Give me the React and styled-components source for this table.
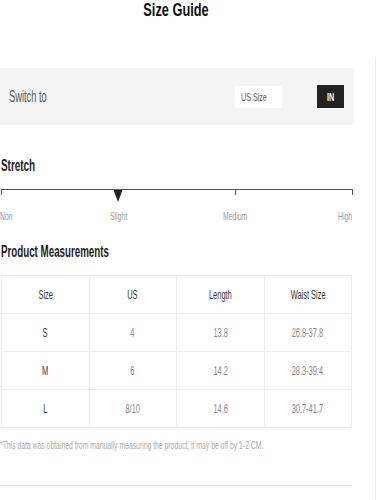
import React from "react";
import styled, { createGlobalStyle } from "styled-components";

const Global = createGlobalStyle`
  html, body { margin: 0; padding: 0; background: #fff; }
  body { font-family: "Liberation Sans", Arial, Helvetica, sans-serif; color: #222; }
`;

/* The reference typography is a horizontally condensed Arial-like face. */
const Squeeze = styled.span`
  display: inline-block;
  white-space: nowrap;
  transform: scaleX(${(p) => p.$scale || 0.62});
  transform-origin: ${(p) => p.$origin || "left"} center;
`;

const Page = styled.div`
  width: 377px;
  min-height: 500px;
  position: relative;
  box-sizing: border-box;
  padding-right: 24px;
  overflow: hidden;
`;

const EdgeLine = styled.div`
  position: absolute;
  right: 1px;
  top: 58px;
  bottom: 0;
  width: 1px;
  background: #ededed;
`;

const Title = styled.h1`
  margin: 0;
  height: 68px;
  text-align: center;
  font-size: 18px;
  font-weight: 700;
  line-height: 20px;
  color: #111;
`;

const SwitchBar = styled.div`
  background: #f4f4f4;
  height: 57px;
  display: flex;
  align-items: center;
  padding: 0 9px;
  box-sizing: border-box;
`;

const SwitchLabel = styled.span`
  font-size: 16px;
  color: #555;
  flex: 1;
`;

const UnitBox = styled.div`
  background: #fff;
  width: 47px;
  height: 22px;
  display: flex;
  align-items: center;
  padding-left: 6px;
  box-sizing: border-box;
  font-size: 11.5px;
  color: #555;
  margin-right: 35px;
`;

const UnitButton = styled.div`
  background: #222;
  color: #fff;
  width: 27px;
  height: 23px;
  display: flex;
  align-items: center;
  justify-content: center;
  font-size: 11px;
  font-weight: 700;
`;

const SectionTitle = styled.h2`
  margin: 0;
  font-size: 16px;
  font-weight: 700;
  color: #222;
  line-height: 18px;
  padding-left: 1px;
`;

const StretchSection = styled.div`
  padding-top: 32px;
`;

const Scale = styled.div`
  position: relative;
  margin-top: 14px;
  margin-left: 1px;
  height: 14px;
  border-top: 1px solid #555;
  display: grid;
  grid-template-columns: 234px 1fr;
  width: 352px;
`;

const Tick = styled.div`
  border-left: 1px solid #555;
  height: 5px;
  ${(p) => p.$right && "border-right: 1px solid #555;"}
`;

const Marker = styled.svg`
  position: absolute;
  left: 112px;
  top: 0px;
`;

const ScaleLabels = styled.div`
  font-size: 11px;
  color: #999;
  margin-top: 6px;
  width: 353px;
  position: relative;
  height: 13px;
`;

const ScaleLabel = styled.span`
  position: absolute;
  left: ${(p) => p.$x}px;
  top: 0;
`;

const MeasureSection = styled.div`
  padding-top: 20px;
`;

const Table = styled.table`
  margin-top: 14px;
  margin-left: 1px;
  width: 351px;
  border-collapse: collapse;
  table-layout: fixed;
`;

const Cell = styled.td`
  border: 1px solid #ececec;
  height: 37px;
  padding: 0;
  text-align: center;
  font-size: 12px;
  font-weight: 400;
  color: ${(p) => (p.$strong ? "#333" : "#888")};
`;

const Note = styled.p`
  margin: 11px 0 0 0;
  width: 353px;
  overflow: hidden;
  font-size: 11px;
  line-height: 13px;
  color: #aaa;
`;

const BottomRule = styled.div`
  margin-top: 33px;
  width: 352px;
  border-top: 1px solid #e8e8e8;
`;

const rows = [
  ["S", "4", "13.8", "26.8-37.8"],
  ["M", "6", "14.2", "28.3-39.4"],
  ["L", "8/10", "14.6", "30.7-41.7"],
];

const head = ["Size", "US", "Length", "Waist Size"];

export default function App() {
  return (
    <>
      <Global />
      <Page>
        <EdgeLine />
        <Title>
          <Squeeze $scale={0.71} $origin="center">Size Guide</Squeeze>
        </Title>
        <SwitchBar>
          <SwitchLabel>
            <Squeeze $scale={0.58}>Switch to</Squeeze>
          </SwitchLabel>
          <UnitBox>
            <Squeeze $scale={0.62}>US Size</Squeeze>
          </UnitBox>
          <UnitButton>
            <Squeeze $scale={0.65} $origin="center">IN</Squeeze>
          </UnitButton>
        </SwitchBar>
        <StretchSection>
          <SectionTitle>
            <Squeeze>Stretch</Squeeze>
          </SectionTitle>
          <Scale>
            <Tick />
            <Tick $right />
            <Marker width="10" height="12" viewBox="0 0 10 12">
              <polygon points="0.5,0 9.5,0 5,12" fill="#222" />
            </Marker>
          </Scale>
          <ScaleLabels>
            <ScaleLabel $x={0}><Squeeze>Non</Squeeze></ScaleLabel>
            <ScaleLabel $x={110}><Squeeze>Slight</Squeeze></ScaleLabel>
            <ScaleLabel $x={223}><Squeeze>Medium</Squeeze></ScaleLabel>
            <ScaleLabel $x={338}><Squeeze>High</Squeeze></ScaleLabel>
          </ScaleLabels>
        </StretchSection>
        <MeasureSection>
          <SectionTitle>
            <Squeeze $scale={0.61}>Product Measurements</Squeeze>
          </SectionTitle>
          <Table>
            <thead>
              <tr>
                {head.map((h) => (
                  <Cell as="th" key={h} $strong>
                    <Squeeze $origin="center">{h}</Squeeze>
                  </Cell>
                ))}
              </tr>
            </thead>
            <tbody>
              {rows.map((r) => (
                <tr key={r[0]}>
                  {r.map((c, i) => (
                    <Cell key={i} $strong={i === 0}>
                      <Squeeze $origin="center">{c}</Squeeze>
                    </Cell>
                  ))}
                </tr>
              ))}
            </tbody>
          </Table>
          <Note>
            <Squeeze $scale={0.62}>
              *This data was obtained from manually measuring the product, it may be off by 1-2 CM.
            </Squeeze>
          </Note>
          <BottomRule />
        </MeasureSection>
      </Page>
    </>
  );
}
